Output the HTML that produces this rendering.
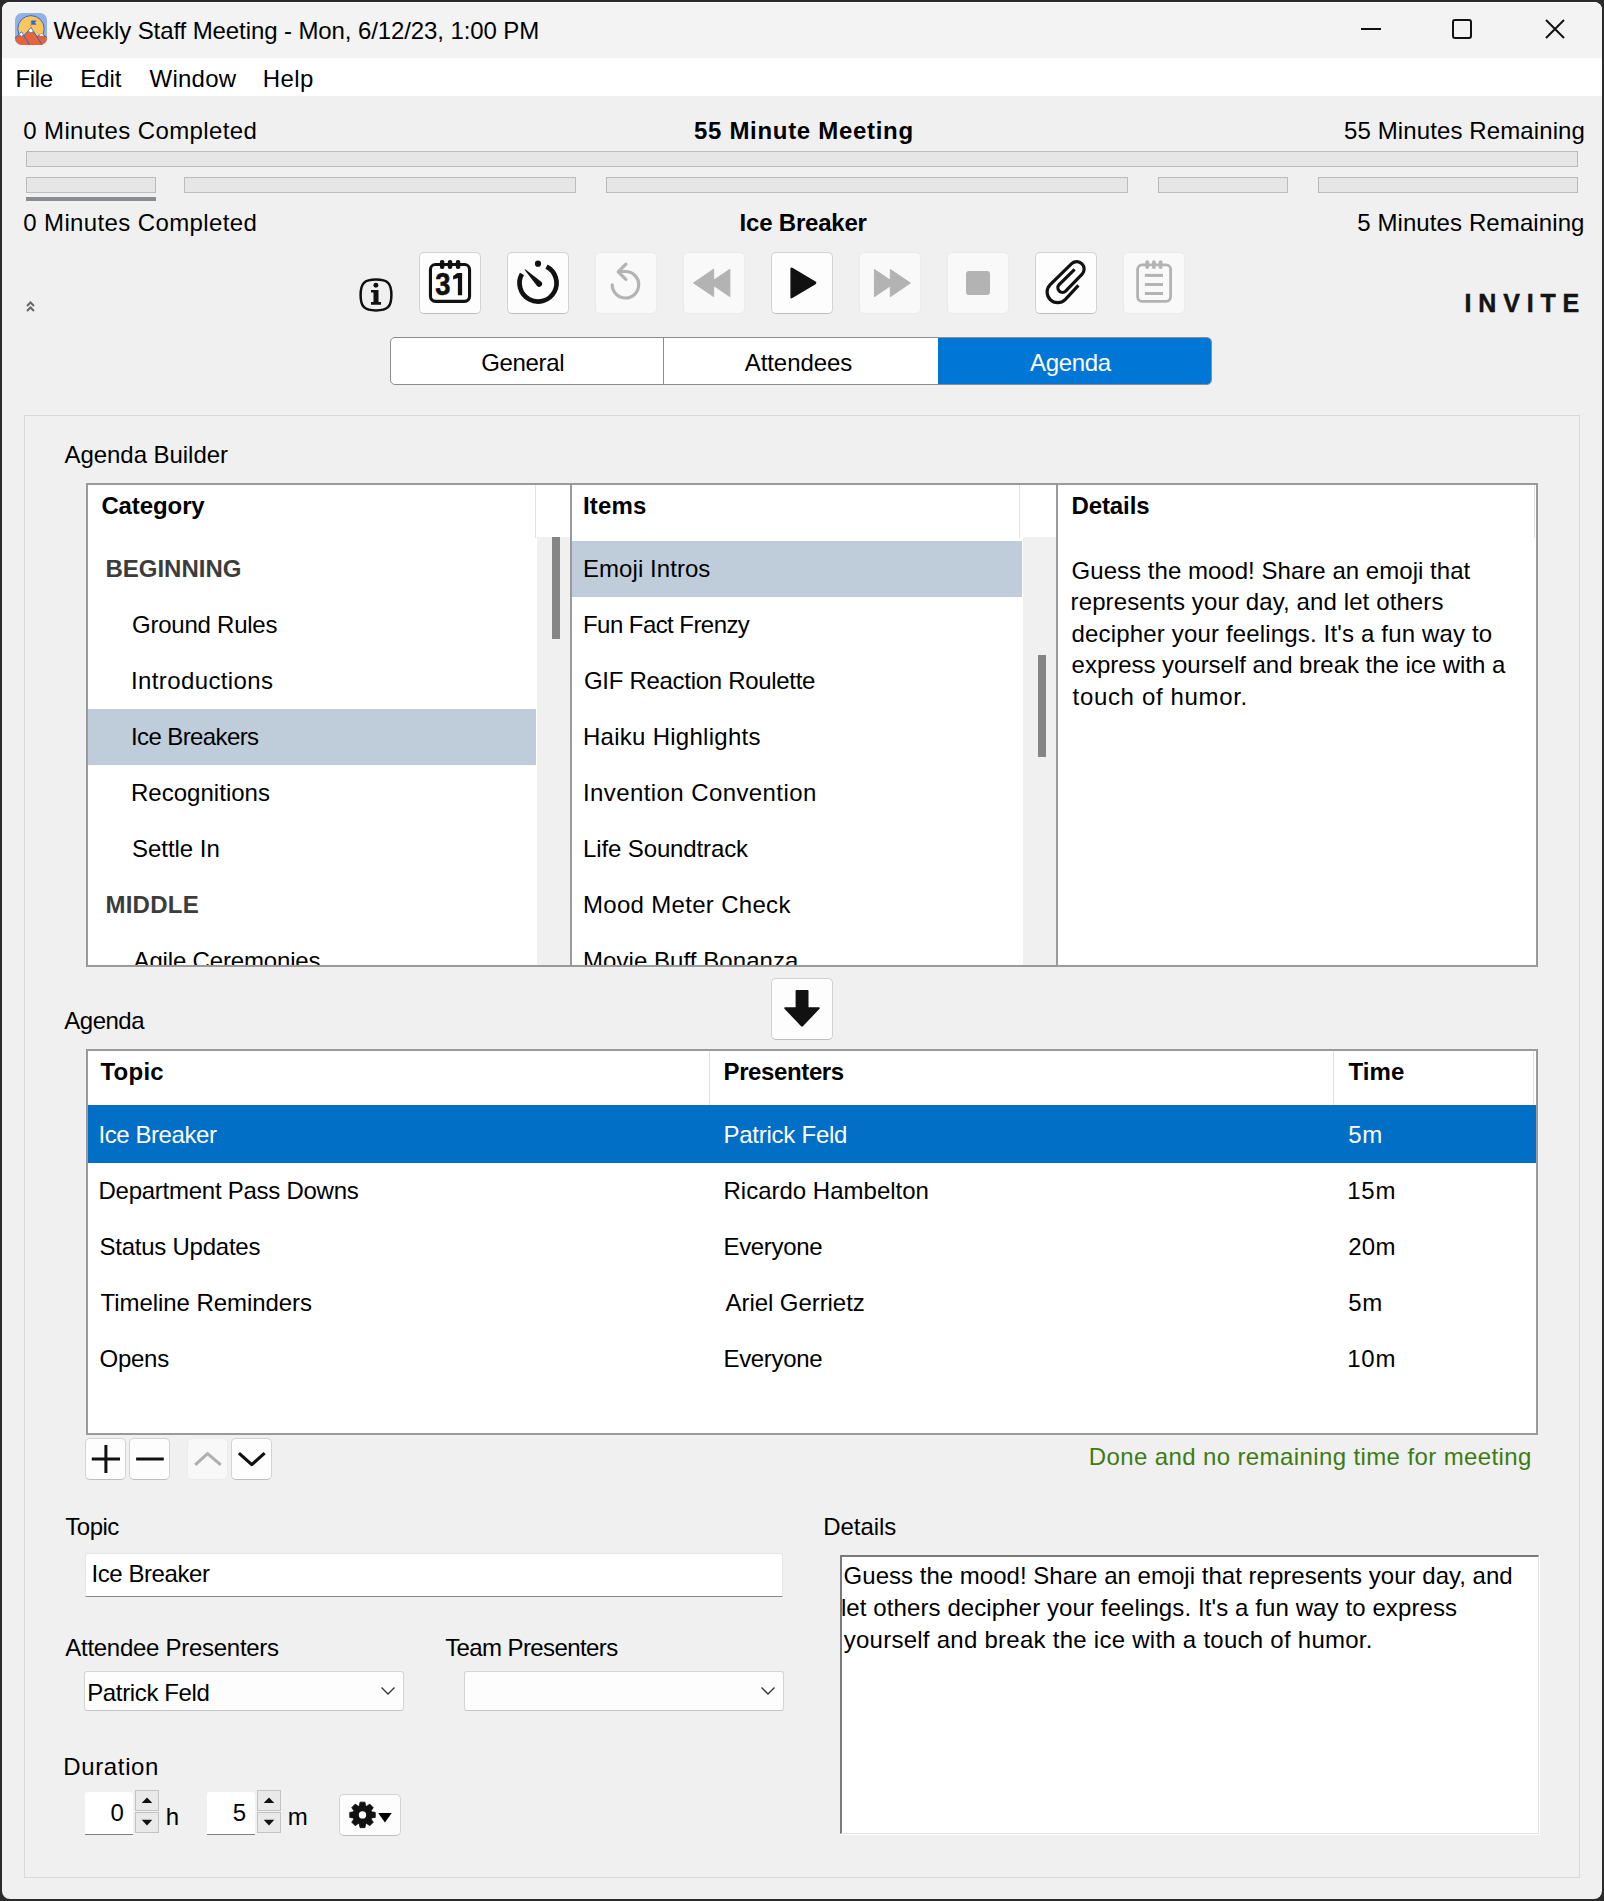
<!DOCTYPE html>
<html><head><meta charset="utf-8">
<style>
html,body{margin:0;padding:0;}
body{width:1604px;height:1901px;background:#2b2b2b;position:relative;overflow:hidden;font-family:"Liberation Sans",sans-serif;}
.abs{position:absolute;}
.t{position:absolute;font-size:24px;line-height:28px;white-space:nowrap;color:#000;font-family:"Liberation Sans",sans-serif;}
.b{font-weight:bold;}
.r{text-align:right;}
.c{text-align:center;}
.box{position:absolute;box-sizing:border-box;}
svg{position:absolute;overflow:visible;}
</style></head>
<body>

<div class="box" style="left:2px;top:2px;width:1600px;height:1897px;border-radius:8px;background:#f0f0f0;"></div>
<div class="box" style="left:2px;top:2px;width:1600px;height:56px;border-radius:8px 8px 0 0;background:#f3f3f3;border-top:1px solid #fbfbfb;"></div>
<div class="box" style="left:2px;top:58px;width:1600px;height:38px;background:#fff;"></div>
<svg style="left:15px;top:13px" width="32" height="32" viewBox="0 0 32 32">
<defs><clipPath id="ic"><rect x="0" y="0" width="32" height="32" rx="7"/></clipPath></defs>
<g clip-path="url(#ic)">
<rect x="0" y="0" width="32" height="32" fill="#8fb3e4"/>
<circle cx="16" cy="15.8" r="13.2" fill="#fdc55e" stroke="#2f6ad0" stroke-width="1"/>
<path d="M21 24.5 L26.5 20.6 L34 26 L34 34 L21 34 Z" fill="#e4643d" stroke="#2f6ad0" stroke-width="1"/>
<path d="M24.2 22.2 L26.5 20.6 L28.8 22.2 L27.5 23 L26.5 22.4 L25.5 23 Z" fill="#fff"/>
<path d="M9 22.5 L16 14.6 L28 33 L9 33 Z" fill="#e4643d" stroke="#2f6ad0" stroke-width="1" stroke-linejoin="round"/>
<path d="M12.6 18.5 L16 14.6 L19.4 19.4 L17.6 18.7 L16 20 L14.2 18.7 Z" fill="#fff" stroke="#2f6ad0" stroke-width="0.7" stroke-linejoin="round"/>
<path d="M-2 27 L6.5 19 L15.2 33 L-2 33 Z" fill="#e4643d" stroke="#2f6ad0" stroke-width="1" stroke-linejoin="round"/>
<path d="M3.6 21.8 L6.5 19 L9.4 22.8 L7.6 22.2 L6.4 23.4 L5 22.3 Z" fill="#fff" stroke="#2f6ad0" stroke-width="0.7" stroke-linejoin="round"/>
<line x1="16" y1="14.6" x2="16" y2="8" stroke="#c29a45" stroke-width="0.8"/>
<path d="M16.3 7.6 L21.6 7.6 L20 9.7 L21.6 11.8 L16.3 11.8 Z" fill="#2f6ad0"/>
</g>
</svg>
<div class="t" style="left:53.5px;top:17px;letter-spacing:-0.1px;">Weekly Staff Meeting - Mon, 6/12/23, 1:00 PM</div>
<div class="box" style="left:1361px;top:28px;width:20px;height:2px;background:#111;"></div>
<div class="box" style="left:1452px;top:19px;width:20px;height:20px;border:2px solid #111;border-radius:3px;"></div>
<svg style="left:1545px;top:19px" width="20" height="20" viewBox="0 0 20 20"><path d="M1 1 L19 19 M19 1 L1 19" stroke="#111" stroke-width="2"/></svg>
<div class="t" style="left:15.5px;top:65px;letter-spacing:-0.37px;">File</div>
<div class="t" style="left:80.3px;top:65px;letter-spacing:-0.1px;">Edit</div>
<div class="t" style="left:149.6px;top:65px;letter-spacing:0.22px;">Window</div>
<div class="t" style="left:262.8px;top:65px;letter-spacing:0.4px;">Help</div>
<div class="t" style="left:23.3px;top:117px;letter-spacing:0.37px;">0 Minutes Completed</div>
<div class="t b" style="left:694px;top:117px;letter-spacing:0.69px;">55 Minute Meeting</div>
<div class="t" style="left:1344px;top:117px;letter-spacing:0.11px;">55 Minutes Remaining</div>
<div class="box" style="left:26px;top:151px;width:1552px;height:16px;background:#e6e6e6;border:1px solid #bcbcbc;"></div>
<div class="box" style="left:26px;top:177px;width:130px;height:16px;background:#e6e6e6;border:1px solid #bcbcbc;"></div>
<div class="box" style="left:184px;top:177px;width:392px;height:16px;background:#e6e6e6;border:1px solid #bcbcbc;"></div>
<div class="box" style="left:606px;top:177px;width:522px;height:16px;background:#e6e6e6;border:1px solid #bcbcbc;"></div>
<div class="box" style="left:1158px;top:177px;width:130px;height:16px;background:#e6e6e6;border:1px solid #bcbcbc;"></div>
<div class="box" style="left:1318px;top:177px;width:260px;height:16px;background:#e6e6e6;border:1px solid #bcbcbc;"></div>
<div class="box" style="left:26px;top:197px;width:130px;height:4px;background:#898c91;"></div>
<div class="t" style="left:23.3px;top:209px;letter-spacing:0.37px;">0 Minutes Completed</div>
<div class="t b" style="left:739.6px;top:209px;letter-spacing:-0.21px;">Ice Breaker</div>
<div class="t" style="left:1357.2px;top:209px;letter-spacing:0.1px;">5 Minutes Remaining</div>
<svg style="left:26px;top:301px" width="9" height="12" viewBox="0 0 9 12"><path d="M1 5 L4.5 1.5 L8 5 M1 10 L4.5 6.5 L8 10" fill="none" stroke="#666" stroke-width="2"/></svg>
<svg style="left:358px;top:277px" width="36" height="36" viewBox="0 0 36 36">
<path d="M18 2.6 C29.5 2.6 33.4 6 33.4 18 C33.4 30 29.5 33.4 18 33.4 C6.5 33.4 2.6 30 2.6 18 C2.6 6 6.5 2.6 18 2.6 Z" fill="none" stroke="#111" stroke-width="2.5"/>
<circle cx="17.9" cy="8.3" r="2.45" fill="#111"/>
<path d="M13 13.1 L20.5 13.1 L20.5 25.1 L23 25.1 L23 27.8 L13 27.8 L13 25.1 L15.5 25.1 L15.5 15.6 L13 15.6 Z" fill="#111"/>
</svg>
<div class="box" style="left:419px;top:252px;width:62px;height:62px;background:#fdfdfd;border:1px solid #d3d3d3;border-bottom-color:#bcbcbc;border-radius:5px;"></div>
<div class="box" style="left:507px;top:252px;width:62px;height:62px;background:#fdfdfd;border:1px solid #d3d3d3;border-bottom-color:#bcbcbc;border-radius:5px;"></div>
<div class="box" style="left:595px;top:252px;width:62px;height:62px;background:#f9f9f9;border:1px solid #ebebeb;border-radius:5px;"></div>
<div class="box" style="left:683px;top:252px;width:62px;height:62px;background:#f9f9f9;border:1px solid #ebebeb;border-radius:5px;"></div>
<div class="box" style="left:771px;top:252px;width:62px;height:62px;background:#fdfdfd;border:1px solid #d3d3d3;border-bottom-color:#bcbcbc;border-radius:5px;"></div>
<div class="box" style="left:859px;top:252px;width:62px;height:62px;background:#f9f9f9;border:1px solid #ebebeb;border-radius:5px;"></div>
<div class="box" style="left:947px;top:252px;width:62px;height:62px;background:#f9f9f9;border:1px solid #ebebeb;border-radius:5px;"></div>
<div class="box" style="left:1035px;top:252px;width:62px;height:62px;background:#fdfdfd;border:1px solid #d3d3d3;border-bottom-color:#bcbcbc;border-radius:5px;"></div>
<div class="box" style="left:1123px;top:252px;width:62px;height:62px;background:#f9f9f9;border:1px solid #ebebeb;border-radius:5px;"></div>
<svg style="left:419px;top:252px" width="62" height="62" viewBox="0 0 62 62"><rect x="11.45" y="12.55" width="39.1" height="36.8" rx="5" fill="none" stroke="#111" stroke-width="3.1"/>
<rect x="20.9" y="8" width="4.5" height="9" rx="2" fill="#111"/>
<rect x="28.8" y="8" width="4.5" height="9" rx="2" fill="#111"/>
<rect x="36.8" y="8" width="4.5" height="9" rx="2" fill="#111"/>
<text x="16.3" y="43.2" textLength="15.2" lengthAdjust="spacingAndGlyphs" font-family="Liberation Sans" font-weight="bold" font-size="32" fill="#111" stroke="#111" stroke-width="0.6">3</text>
<path d="M38.38 20.93 L43.12 20.93 L43.12 43.37 L38.88 43.37 L38.88 25.92 L34.14 27.41 L34.14 23.92 Z" fill="#111"/></svg>
<svg style="left:507px;top:252px" width="62" height="62" viewBox="0 0 62 62"><path d="M39.51 14.6 A18.5 18.5 0 1 1 14.95 21.94" fill="none" stroke="#111" stroke-width="4.7"/>
<circle cx="31" cy="11.7" r="3.1" fill="#111"/>
<path d="M17.4 17.6 L18.6 17.4 L34.25 29.76 A3 3 0 0 1 30.05 34.04 Z" fill="#111"/></svg>
<svg style="left:595px;top:252px" width="62" height="62" viewBox="0 0 62 62"><path d="M17.2 32.75 A13.25 13.25 0 1 0 30.25 19.5 L23.5 19.5" fill="none" stroke="#b3b3b3" stroke-width="3.2" stroke-linecap="round"/>
<path d="M30.9 12.2 L23.2 19.8 L30.9 27.4" fill="none" stroke="#b3b3b3" stroke-width="3.2" stroke-linecap="round" stroke-linejoin="round"/></svg>
<svg style="left:683px;top:252px" width="62" height="62" viewBox="0 0 62 62"><path d="M10.5 30.9 L30.65 17.2 L30.65 44.6 Z M26.75 30.9 L46.9 17.2 L46.9 44.6 Z" fill="#b3b3b3" stroke="#b3b3b3" stroke-width="1" stroke-linejoin="round"/></svg>
<svg style="left:771px;top:252px" width="62" height="62" viewBox="0 0 62 62"><path d="M19.4 16.9 Q19.4 14.6 21.4 15.8 L44.6 29.6 Q46.4 30.9 44.6 32.2 L21.4 46 Q19.4 47.2 19.4 44.9 Z" fill="#111"/></svg>
<svg style="left:859px;top:252px" width="62" height="62" viewBox="0 0 62 62"><path d="M15.4 17.4 L15.4 44.7 L35.5 31 Z M31.3 17.4 L31.3 44.7 L51.4 31 Z" fill="#b3b3b3" stroke="#b3b3b3" stroke-width="1" stroke-linejoin="round"/></svg>
<svg style="left:947px;top:252px" width="62" height="62" viewBox="0 0 62 62"><rect x="19" y="19" width="24" height="24" rx="3" fill="#b3b3b3"/></svg>
<svg style="left:1035px;top:252px" width="62" height="62" viewBox="0 0 62 62"><path d="M43.4 33.3 L30.2 47.6 A10.6 10.6 0 0 1 15.2 32.6 L36.67 11.67 A7.4 7.4 0 0 1 47.13 22.13 L30.65 39.15 A4.6 4.6 0 0 1 24.15 32.65 L39.6 17.4" fill="none" stroke="#111" stroke-width="3.2"/></svg>
<svg style="left:1123px;top:252px" width="62" height="62" viewBox="0 0 62 62"><rect x="14.6" y="12.8" width="33" height="36.5" rx="4.5" fill="none" stroke="#b3b3b3" stroke-width="2.8"/>
<rect x="22.3" y="8.3" width="3.8" height="8.7" rx="1.9" fill="#b3b3b3"/>
<rect x="29" y="8.3" width="3.8" height="8.7" rx="1.9" fill="#b3b3b3"/>
<rect x="35.7" y="8.3" width="3.8" height="8.7" rx="1.9" fill="#b3b3b3"/>
<rect x="21.9" y="21.9" width="18.1" height="3" fill="#b3b3b3"/>
<rect x="21.9" y="31" width="18.1" height="3" fill="#b3b3b3"/>
<rect x="21.9" y="40" width="18.1" height="3" fill="#b3b3b3"/></svg>
<div class="t b" style="left:1464.6px;top:289px;color:#141414;font-size:25px;letter-spacing:6.8px;-webkit-text-stroke:0.45px #141414;">INVITE</div>
<div class="box" style="left:390px;top:337px;width:822px;height:48px;background:#fff;border:1px solid #8c8c8c;border-radius:5px;"></div>
<div class="box" style="left:938px;top:338px;width:273px;height:46px;background:#0076d7;border-radius:0 4px 4px 0;"></div>
<div class="box" style="left:663px;top:338px;width:1px;height:46px;background:#8c8c8c;"></div>
<div class="t" style="left:481.3px;top:349px;letter-spacing:-0.37px;">General</div>
<div class="t" style="left:744.7px;top:349px;letter-spacing:-0.06px;">Attendees</div>
<div class="t" style="left:1030.1px;top:349px;color:#fff;letter-spacing:-0.36px;">Agenda</div>
<div class="box" style="left:24px;top:415px;width:1556px;height:1463px;border:1px solid #d9d9d9;"></div>
<div class="t" style="left:64.5px;top:441px;letter-spacing:-0.05px;">Agenda Builder</div>
<div class="box" style="left:86px;top:483px;width:1452px;height:484px;background:#fff;border:2px solid #9a9a9a;"></div>
<div class="box" style="left:535px;top:485px;width:1px;height:53px;background:#e3e3e3;"></div>
<div class="box" style="left:1019px;top:485px;width:1px;height:53px;background:#e3e3e3;"></div>
<div class="box" style="left:1534px;top:485px;width:1px;height:53px;background:#e3e3e3;"></div>
<div class="box" style="left:537px;top:537px;width:33px;height:428px;background:#f0f0f0;"></div>
<div class="box" style="left:1023px;top:537px;width:33px;height:428px;background:#f0f0f0;"></div>
<div class="box" style="left:552px;top:537px;width:8px;height:102px;background:#858585;"></div>
<div class="box" style="left:1038px;top:655px;width:8px;height:102px;background:#858585;"></div>
<div class="box" style="left:570px;top:485px;width:2px;height:480px;background:#9a9a9a;"></div>
<div class="box" style="left:1056px;top:485px;width:2px;height:480px;background:#9a9a9a;"></div>
<div class="box" style="left:88px;top:709px;width:448px;height:56px;background:#bfcddb;"></div>
<div class="box" style="left:572px;top:541px;width:450px;height:56px;background:#bfcddb;"></div>
<div class="t b" style="left:101.4px;top:492px;letter-spacing:-0.1px;">Category</div>
<div class="t b" style="left:583px;top:492px;letter-spacing:0.18px;">Items</div>
<div class="t b" style="left:1071.5px;top:492px;letter-spacing:-0.1px;">Details</div>
<div class="abs" style="left:88px;top:485px;width:448px;height:480px;overflow:hidden;">
<div class="t b" style="left:17.4px;top:70px;color:#3c3c3c;letter-spacing:0.01px;">BEGINNING</div>
<div class="t" style="left:44px;top:126px;letter-spacing:-0.24px;">Ground Rules</div>
<div class="t" style="left:43px;top:182px;letter-spacing:0.38px;">Introductions</div>
<div class="t" style="left:43px;top:238px;letter-spacing:-0.61px;">Ice Breakers</div>
<div class="t" style="left:43px;top:294px;letter-spacing:0.02px;">Recognitions</div>
<div class="t" style="left:44px;top:350px;letter-spacing:-0.04px;">Settle In</div>
<div class="t b" style="left:17.4px;top:406px;color:#3c3c3c;letter-spacing:0.28px;">MIDDLE</div>
<div class="t" style="left:45.6px;top:462px;letter-spacing:-0.17px;">Agile Ceremonies</div>
</div>
<div class="abs" style="left:572px;top:485px;width:450px;height:480px;overflow:hidden;">
<div class="t" style="left:11px;top:70px;letter-spacing:0.06px;">Emoji Intros</div>
<div class="t" style="left:11px;top:126px;letter-spacing:-0.56px;">Fun Fact Frenzy</div>
<div class="t" style="left:12px;top:182px;letter-spacing:-0.3px;">GIF Reaction Roulette</div>
<div class="t" style="left:11px;top:238px;letter-spacing:0.27px;">Haiku Highlights</div>
<div class="t" style="left:11px;top:294px;letter-spacing:0.41px;">Invention Convention</div>
<div class="t" style="left:11px;top:350px;letter-spacing:-0.12px;">Life Soundtrack</div>
<div class="t" style="left:11px;top:406px;letter-spacing:0.31px;">Mood Meter Check</div>
<div class="t" style="left:11px;top:462px;letter-spacing:0.06px;">Movie Buff Bonanza</div>
</div>
<div class="t" style="left:1071.6px;top:556.8px;letter-spacing:0.03px;">Guess the mood! Share an emoji that</div>
<div class="t" style="left:1070.6px;top:588.3px;letter-spacing:0.11px;">represents your day, and let others</div>
<div class="t" style="left:1071.6px;top:619.9px;letter-spacing:0.16px;">decipher your feelings. It's a fun way to</div>
<div class="t" style="left:1071.6px;top:651.4px;letter-spacing:-0.03px;">express yourself and break the ice with a</div>
<div class="t" style="left:1072.6px;top:683px;letter-spacing:0.66px;">touch of humor.</div>
<div class="box" style="left:771px;top:978px;width:62px;height:62px;background:#fdfdfd;border:1px solid #d0d0d0;border-bottom-color:#bdbdbd;border-radius:5px;"></div>
<svg style="left:771px;top:978px" width="62" height="62" viewBox="0 0 62 62">
<path d="M24.6 13 Q24.6 12.1 25.5 12.1 L36.6 12.1 Q37.5 12.1 37.5 13 L37.5 29.3 L47.8 29.3 Q49.5 29.6 48.3 31 L31.9 48.3 Q31 49.2 30.1 48.3 L13.7 31 Q12.5 29.6 14.2 29.3 L24.6 29.3 Z" fill="#111"/>
</svg>
<div class="t" style="left:64.3px;top:1007px;letter-spacing:-0.5px;">Agenda</div>
<div class="box" style="left:86px;top:1049px;width:1452px;height:386px;background:#fff;border:2px solid #9a9a9a;"></div>
<div class="box" style="left:709px;top:1051px;width:1px;height:54px;background:#e3e3e3;"></div>
<div class="box" style="left:1333px;top:1051px;width:1px;height:54px;background:#e3e3e3;"></div>
<div class="box" style="left:1533px;top:1051px;width:1px;height:54px;background:#e3e3e3;"></div>
<div class="box" style="left:88px;top:1105px;width:1448px;height:58px;background:#006fc5;"></div>
<div class="t b" style="left:100.5px;top:1058px;letter-spacing:0.23px;">Topic</div>
<div class="t b" style="left:723.5px;top:1058px;letter-spacing:-0.38px;">Presenters</div>
<div class="t b" style="left:1348.6px;top:1058px;letter-spacing:0.03px;">Time</div>
<div class="t" style="left:98.5px;top:1121px;color:#fff;letter-spacing:-0.43px;">Ice Breaker</div>
<div class="t" style="left:723.5px;top:1121px;color:#fff;letter-spacing:-0.25px;">Patrick Feld</div>
<div class="t" style="left:1348.2px;top:1121px;color:#fff;letter-spacing:0.6px;">5m</div>
<div class="t" style="left:98.5px;top:1177px;letter-spacing:-0.26px;">Department Pass Downs</div>
<div class="t" style="left:723.5px;top:1177px;">Ricardo Hambelton</div>
<div class="t" style="left:1347.2px;top:1177px;letter-spacing:0.75px;">15m</div>
<div class="t" style="left:99.5px;top:1233px;letter-spacing:-0.24px;">Status Updates</div>
<div class="t" style="left:723.5px;top:1233px;letter-spacing:-0.33px;">Everyone</div>
<div class="t" style="left:1348.2px;top:1233px;letter-spacing:0.3px;">20m</div>
<div class="t" style="left:100.5px;top:1289px;letter-spacing:-0.06px;">Timeline Reminders</div>
<div class="t" style="left:725.5px;top:1289px;letter-spacing:-0.06px;">Ariel Gerrietz</div>
<div class="t" style="left:1348.2px;top:1289px;letter-spacing:0.6px;">5m</div>
<div class="t" style="left:99.5px;top:1345px;letter-spacing:-0.27px;">Opens</div>
<div class="t" style="left:723.5px;top:1345px;letter-spacing:-0.33px;">Everyone</div>
<div class="t" style="left:1347.2px;top:1345px;letter-spacing:0.8px;">10m</div>
<div class="box" style="left:85px;top:1438px;width:41px;height:42px;background:#fdfdfd;border:1px solid #d3d3d3;border-bottom-color:#bdbdbd;border-radius:5px;"></div>
<div class="box" style="left:129px;top:1438px;width:41px;height:42px;background:#fdfdfd;border:1px solid #d3d3d3;border-bottom-color:#bdbdbd;border-radius:5px;"></div>
<div class="box" style="left:187px;top:1438px;width:41px;height:42px;background:#f8f8f8;border:1px solid #ececec;border-radius:5px;"></div>
<div class="box" style="left:231px;top:1438px;width:41px;height:42px;background:#fdfdfd;border:1px solid #d3d3d3;border-bottom-color:#bdbdbd;border-radius:5px;"></div>
<svg style="left:85px;top:1438px" width="41" height="42" viewBox="0 0 41 42"><path d="M6.8 21 L35 21 M20.9 7 L20.9 35" stroke="#111" stroke-width="3"/></svg>
<svg style="left:129px;top:1438px" width="41" height="42" viewBox="0 0 41 42"><path d="M7.1 21 L34.8 21" stroke="#111" stroke-width="3"/></svg>
<svg style="left:187px;top:1438px" width="41" height="42" viewBox="0 0 41 42"><path d="M8.2 26.9 L20.5 15.6 L33.8 26.9" fill="none" stroke="#b0b0b0" stroke-width="3.2" stroke-linejoin="round"/></svg>
<svg style="left:231px;top:1438px" width="41" height="42" viewBox="0 0 41 42"><path d="M7.9 15.1 L20.8 26.6 L33.6 15.1" fill="none" stroke="#111" stroke-width="3.2" stroke-linejoin="round"/></svg>
<div class="t" style="left:1088.7px;top:1443px;color:#3d7c14;letter-spacing:0.39px;">Done and no remaining time for meeting</div>
<div class="t" style="left:65.3px;top:1513px;letter-spacing:-0.5px;">Topic</div>
<div class="box" style="left:85px;top:1553px;width:698px;height:44px;background:#fff;border:1px solid #e6e6e6;border-bottom:1px solid #8a8a8a;border-radius:3px 3px 0 0;"></div>
<div class="t" style="left:91.5px;top:1560px;letter-spacing:-0.43px;">Ice Breaker</div>
<div class="t" style="left:823.3px;top:1512.5px;letter-spacing:-0.08px;">Details</div>
<div class="box" style="left:840px;top:1555px;width:700px;height:280px;background:#fff;border-right:1px solid #fff;border-bottom:1px solid #fff;"></div>
<div class="box" style="left:840px;top:1555px;width:699px;height:279px;background:#fff;border:2px solid #7a7a7a;border-right:1px solid #e3e3e3;border-bottom:1px solid #e3e3e3;"></div>
<div class="t" style="left:843.6px;top:1562px;letter-spacing:0.02px;">Guess the mood! Share an emoji that represents your day, and</div>
<div class="t" style="left:840.9px;top:1594px;letter-spacing:0.1px;">let others decipher your feelings. It's a fun way to express</div>
<div class="t" style="left:843.7px;top:1626px;letter-spacing:0.26px;">yourself and break the ice with a touch of humor.</div>
<div class="t" style="left:65.3px;top:1634px;letter-spacing:-0.28px;">Attendee Presenters</div>
<div class="t" style="left:445.2px;top:1634px;letter-spacing:-0.6px;">Team Presenters</div>
<div class="box" style="left:84px;top:1671px;width:320px;height:40px;background:#fdfdfd;border:1px solid #d4d4d4;border-bottom-color:#c6c6c6;border-radius:3px;"></div>
<svg style="left:381px;top:1687px" width="14" height="8" viewBox="0 0 14 8"><path d="M0.5 0.5 L7 7 L13.5 0.5" fill="none" stroke="#333" stroke-width="1.3"/></svg>
<div class="box" style="left:464px;top:1671px;width:320px;height:40px;background:#fdfdfd;border:1px solid #d4d4d4;border-bottom-color:#c6c6c6;border-radius:3px;"></div>
<svg style="left:761px;top:1687px" width="14" height="8" viewBox="0 0 14 8"><path d="M0.5 0.5 L7 7 L13.5 0.5" fill="none" stroke="#333" stroke-width="1.3"/></svg>
<div class="t" style="left:87.2px;top:1679px;letter-spacing:-0.36px;">Patrick Feld</div>
<div class="t" style="left:63.3px;top:1752.5px;letter-spacing:0.63px;">Duration</div>
<div class="box" style="left:85px;top:1792px;width:48px;height:43px;background:#fff;border-bottom:1px solid #7f7f7f;border-radius:3px 3px 0 0;"></div>
<div class="t" style="left:110.6px;top:1798.6px;">0</div>
<div class="box" style="left:135px;top:1790px;width:24px;height:21px;background:#e9e9e9;border:1px solid #c3c3c3;"></div>
<div class="box" style="left:135px;top:1812px;width:24px;height:21px;background:#e9e9e9;border:1px solid #c3c3c3;"></div>
<svg style="left:135px;top:1790px" width="24" height="43" viewBox="0 0 24 43"><path d="M6.7 13 L12 7.4 L17.3 13 Z M6.7 29.8 L17.3 29.8 L12 35.6 Z" fill="#111"/></svg>
<div class="t" style="left:165.8px;top:1803px;">h</div>
<div class="box" style="left:207px;top:1792px;width:48px;height:43px;background:#fff;border-bottom:1px solid #7f7f7f;border-radius:3px 3px 0 0;"></div>
<div class="t" style="left:232.8px;top:1798.6px;">5</div>
<div class="box" style="left:257px;top:1790px;width:24px;height:21px;background:#e9e9e9;border:1px solid #c3c3c3;"></div>
<div class="box" style="left:257px;top:1812px;width:24px;height:21px;background:#e9e9e9;border:1px solid #c3c3c3;"></div>
<svg style="left:257px;top:1790px" width="24" height="43" viewBox="0 0 24 43"><path d="M6.7 13 L12 7.4 L17.3 13 Z M6.7 29.8 L17.3 29.8 L12 35.6 Z" fill="#111"/></svg>
<div class="t" style="left:287.8px;top:1803px;">m</div>
<div class="box" style="left:339px;top:1794px;width:62px;height:42px;background:#fdfdfd;border:1px solid #d4d4d4;border-bottom-color:#bdbdbd;border-radius:5px;"></div>
<svg style="left:339px;top:1794px" width="62" height="42" viewBox="0 0 62 42">
<path d="M20.37 11.82 L21.02 8.14 L25.98 8.14 L26.63 11.82 L27.71 12.27 L30.77 10.12 L34.28 13.63 L32.13 16.69 L32.58 17.77 L36.26 18.42 L36.26 23.38 L32.58 24.03 L32.13 25.11 L34.28 28.17 L30.77 31.68 L27.71 29.53 L26.63 29.98 L25.98 33.66 L21.02 33.66 L20.37 29.98 L19.29 29.53 L16.23 31.68 L12.72 28.17 L14.87 25.11 L14.42 24.03 L10.74 23.38 L10.74 18.42 L14.42 17.77 L14.87 16.69 L12.72 13.63 L16.23 10.12 L19.29 12.27 Z" fill="#111" stroke="#111" stroke-width="0.8" stroke-linejoin="round"/>
<circle cx="23.5" cy="20.9" r="3.7" fill="#fdfdfd"/>
<path d="M39.2 19.1 L52.7 19.1 L45.95 28.5 Z" fill="#000"/>
</svg>
</body></html>
